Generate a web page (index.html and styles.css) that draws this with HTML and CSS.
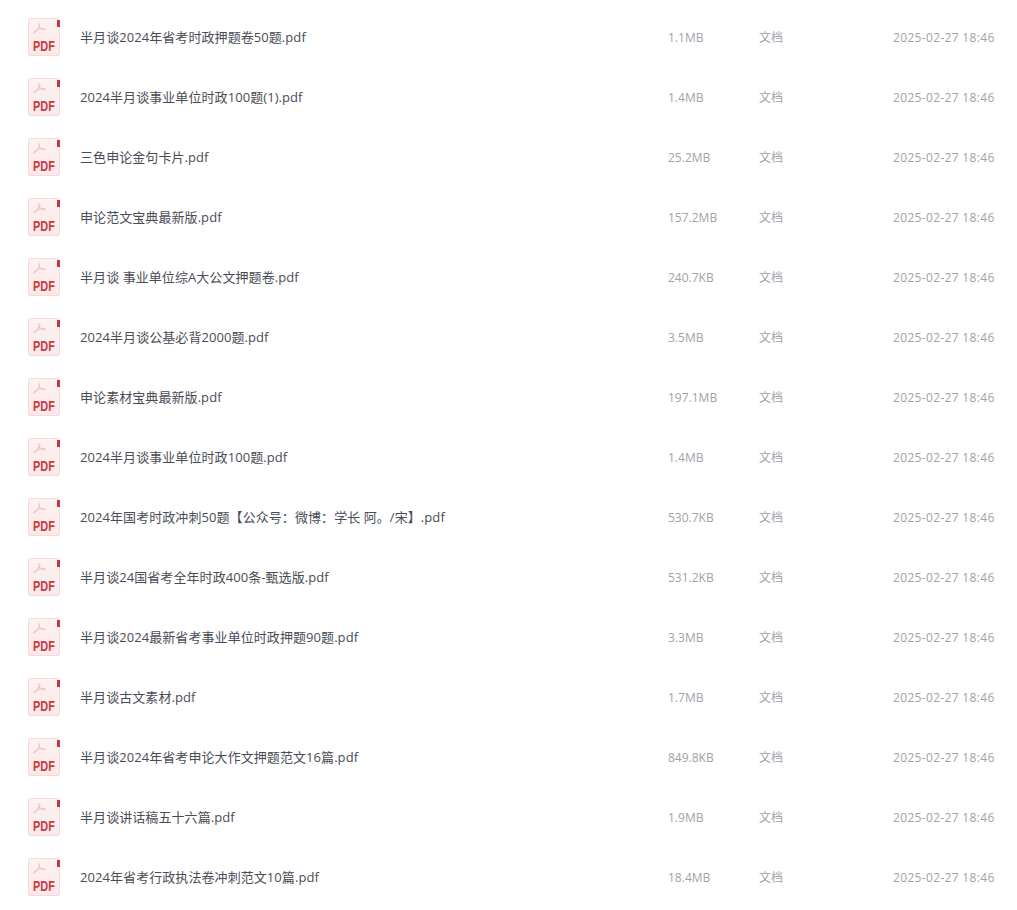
FILE: index.html
```html
<!DOCTYPE html>
<html lang="zh-CN">
<head>
  <meta charset="UTF-8">
  <title>文件列表</title>
  <link rel="stylesheet" href="styles.css">
</head>
<body>
  <svg class="defs" width="0" height="0">
    <symbol id="acrobat" viewBox="0 0 14 12">
      <path d="M1 10.5C3 10 6 6.5 7 1.5C7.2 .6 6.2 .6 6.2 1.6C6.3 4.5 9 7.6 12.8 7.2C13.6 7 13.2 6.2 12 6.2C8.5 6 3.5 7.5 1.2 10C.7 10.6 .8 11 1 10.5Z" />
    </symbol>
  </svg>
  <div id="list"></div>
  <script src="list.js"></script>
</body>
</html>
```
FILE: list.js
```js
const files = [
  ['半月谈2024年省考时政押题卷50题.pdf', '1.1MB'],
  ['2024半月谈事业单位时政100题(1).pdf', '1.4MB'],
  ['三色申论金句卡片.pdf', '25.2MB'],
  ['申论范文宝典最新版.pdf', '157.2MB'],
  ['半月谈 事业单位综A大公文押题卷.pdf', '240.7KB'],
  ['2024半月谈公基必背2000题.pdf', '3.5MB'],
  ['申论素材宝典最新版.pdf', '197.1MB'],
  ['2024半月谈事业单位时政100题.pdf', '1.4MB'],
  ['2024年国考时政冲刺50题【公众号：微博：学长 阿。/宋】.pdf', '530.7KB'],
  ['半月谈24国省考全年时政400条-甄选版.pdf', '531.2KB'],
  ['半月谈2024最新省考事业单位时政押题90题.pdf', '3.3MB'],
  ['半月谈古文素材.pdf', '1.7MB'],
  ['半月谈2024年省考申论大作文押题范文16篇.pdf', '849.8KB'],
  ['半月谈讲话稿五十六篇.pdf', '1.9MB'],
  ['2024年省考行政执法卷冲刺范文10篇.pdf', '18.4MB']
];

// 每行结构相同，直接拼出来
document.getElementById('list').innerHTML = files.map(f => `
  <div class="row">
    <div class="file-icon">
      <i class="corner"></i>
      <svg class="acrobat"><use href="#acrobat"></use></svg>
      <span class="pdf-label">PDF</span>
    </div>
    <div class="name">${f[0]}</div>
    <div class="size">${f[1]}</div>
    <div class="type">文档</div>
    <div class="date">2025-02-27 18:46</div>
  </div>`).join('');
```
FILE: styles.css
```css
body {
  margin: 0;
  background-color: #fff;
  font-family: "Open Sans", "Noto Sans CJK SC", sans-serif;
  overflow: hidden;
}

.defs {
  position: absolute;
}

#list {
  padding-top: 7px;
}

.row {
  display: flex;
  align-items: center;
  height: 60px;
  padding-left: 28px;
  font-size: 12px;
  color: #a0a2a8;
}

.file-icon {
  position: relative;
  flex: none;
  box-sizing: border-box;
  width: 32px;
  height: 38px;
  margin-right: 20px;
  background: linear-gradient(180deg, #fdf1f1, #fce9e9);
  border: 1px solid #f6d9d9;
  border-radius: 2px;
}

.corner {
  position: absolute;
  top: 1px;
  right: -1px;
  width: 3px;
  height: 7px;
  background-color: #bd3a44;
}

.acrobat {
  position: absolute;
  top: 4px;
  left: 4px;
  width: 13px;
  height: 11px;
  fill: none;
  stroke: #f0c6c8;
  stroke-width: 1.3;
}

.pdf-label {
  position: absolute;
  left: 4px;
  bottom: 2px;
  font-family: "Liberation Sans", sans-serif;
  font-size: 14px;
  font-weight: bold;
  line-height: 14px;
  color: #c93a42;
  transform: scaleX(.78);
  transform-origin: left center;
}

.name {
  flex: none;
  width: 588px;
  margin-bottom: 2px;
  font-size: 13px;
  letter-spacing: .07px;
  color: #4a4c55;
}

.size {
  flex: none;
  width: 91px;
}

.type {
  flex: none;
  width: 134px;
}

.date {
  flex: none;
  letter-spacing: .33px;
}
```
